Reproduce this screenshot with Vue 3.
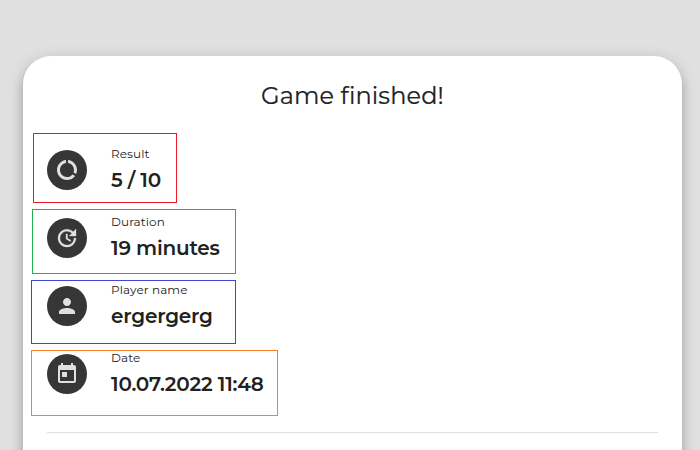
<script setup>
const items = [
  { key: 'result', label: 'Result', value: '5 / 10', icon: 'M13 2.05v3.03c3.39.49 6 3.39 6 6.92 0 .9-.18 1.75-.48 2.54l2.6 1.53c.56-1.24.88-2.62.88-4.07 0-5.18-3.95-9.45-9-9.95zM12 19c-3.87 0-7-3.13-7-7 0-3.53 2.61-6.43 6-6.92V2.05c-5.06.5-9 4.76-9 9.95 0 5.52 4.47 10 9.99 10 3.31 0 6.24-1.61 8.06-4.09l-2.6-1.53C16.17 17.98 14.21 19 12 19z' },
  { key: 'duration', label: 'Duration', value: '19 minutes', icon: 'M21 10.12h-6.78l2.74-2.82c-2.73-2.7-7.15-2.8-9.88-.1-2.73 2.71-2.73 7.08 0 9.79s7.15 2.71 9.88 0C18.32 15.65 19 14.08 19 12.1h2c0 1.98-.88 4.55-2.64 6.29-3.51 3.48-9.21 3.48-12.72 0-3.5-3.47-3.53-9.11-.02-12.58s9.14-3.47 12.65 0L21 3v7.12zM12.5 8v4.25l3.5 2.08-.72 1.21L11 13V8h1.5z' },
  { key: 'player', label: 'Player name', value: 'ergergerg', icon: 'M12 12c2.21 0 4-1.79 4-4s-1.79-4-4-4-4 1.79-4 4 1.79 4 4 4zm0 2c-2.67 0-8 1.34-8 4v2h16v-2c0-2.66-5.33-4-8-4z' },
  { key: 'date', label: 'Date', value: '10.07.2022 11:48', icon: 'M19 3h-1V1h-2v2H8V1H6v2H5c-1.11 0-1.99.9-1.99 2L3 19c0 1.1.89 2 2 2h14c1.1 0 2-.9 2-2V5c0-1.1-.9-2-2-2zm0 16H5V8h14v11zM7 10h5v5H7z' },
]
</script>

<template>
  <main class="page">
    <section class="card">
      <h1 class="title">Game finished!</h1>
      <ul class="list">
        <li v-for="item in items" :key="item.key" class="item" :class="item.key">
          <span class="avatar">
            <svg viewBox="0 0 24 24" width="24" height="24"><path :d="item.icon" /></svg>
          </span>
          <div class="text">
            <span class="label">{{ item.label }}</span>
            <span class="value">{{ item.value }}</span>
          </div>
          <i class="frame"></i>
        </li>
      </ul>
      <hr class="divider" />
    </section>
  </main>
</template>

<style>
body { background: #e0e0e0; overflow: hidden; }
</style>

<style scoped>
.page {
  box-sizing: border-box;
  height: 450px;
  padding: 56px 18px 0 23px;
  overflow: hidden;
  background: #e0e0e0;
  font-family: Montserrat, Inter, "Liberation Sans", sans-serif;
  color: #212121;
}
.card {
  box-sizing: border-box;
  height: 600px;
  padding: 24px;
  border-radius: 28px;
  background: #fff;
  box-shadow: 0 5px 5px -3px rgba(0, 0, 0, .2), 0 8px 10px 1px rgba(0, 0, 0, .14), 0 3px 14px 2px rgba(0, 0, 0, .12);
}
.title {
  margin: 0;
  font-size: 24px;
  font-weight: 400;
  line-height: 32px;
  letter-spacing: .12px;
  text-align: center;
  -webkit-text-stroke: .2px currentColor;
}
.list {
  margin: 32px 0 0;
  padding: 0;
  list-style: none;
}
.item {
  position: relative;
  display: flex;
  gap: 24px;
  height: 68px;
}
.avatar {
  display: flex;
  align-items: center;
  justify-content: center;
  width: 40px;
  height: 40px;
  margin-top: 6px;
  border-radius: 50%;
  background: #363636;
}
.avatar svg { fill: #e0e0e0; }
.duration .avatar svg { stroke: #e0e0e0; stroke-width: .3; }
.text {
  display: flex;
  flex-direction: column;
  white-space: nowrap;
}
.label {
  font-size: 12px;
  line-height: 20px;
  letter-spacing: .1px;
}
.value {
  margin-top: 2px;
  font-size: 20px;
  font-weight: 600;
  line-height: 28px;
  letter-spacing: -.2px;
}
/* Frames sit on top of the list and may extend past their rows */
.frame {
  position: absolute;
  box-sizing: border-box;
  border: 1px solid;
}
.result .frame { left: -14px; top: -11px; width: 144px; height: 70px; border-color: #ed1c24; }
.duration .frame { left: -15px; top: -3px; width: 204px; height: 65px; border-color: #22b14c; }
.player .frame { left: -16px; top: 0; width: 205px; height: 64px; border-color: #3f48cc; }
.date .frame { left: -16px; top: 2px; width: 247px; height: 66px; border-color: #ff7f27; }
.divider {
  height: 1px;
  margin: 16px 0 0;
  border: 0;
  background: #e0e0e0;
}
</style>
